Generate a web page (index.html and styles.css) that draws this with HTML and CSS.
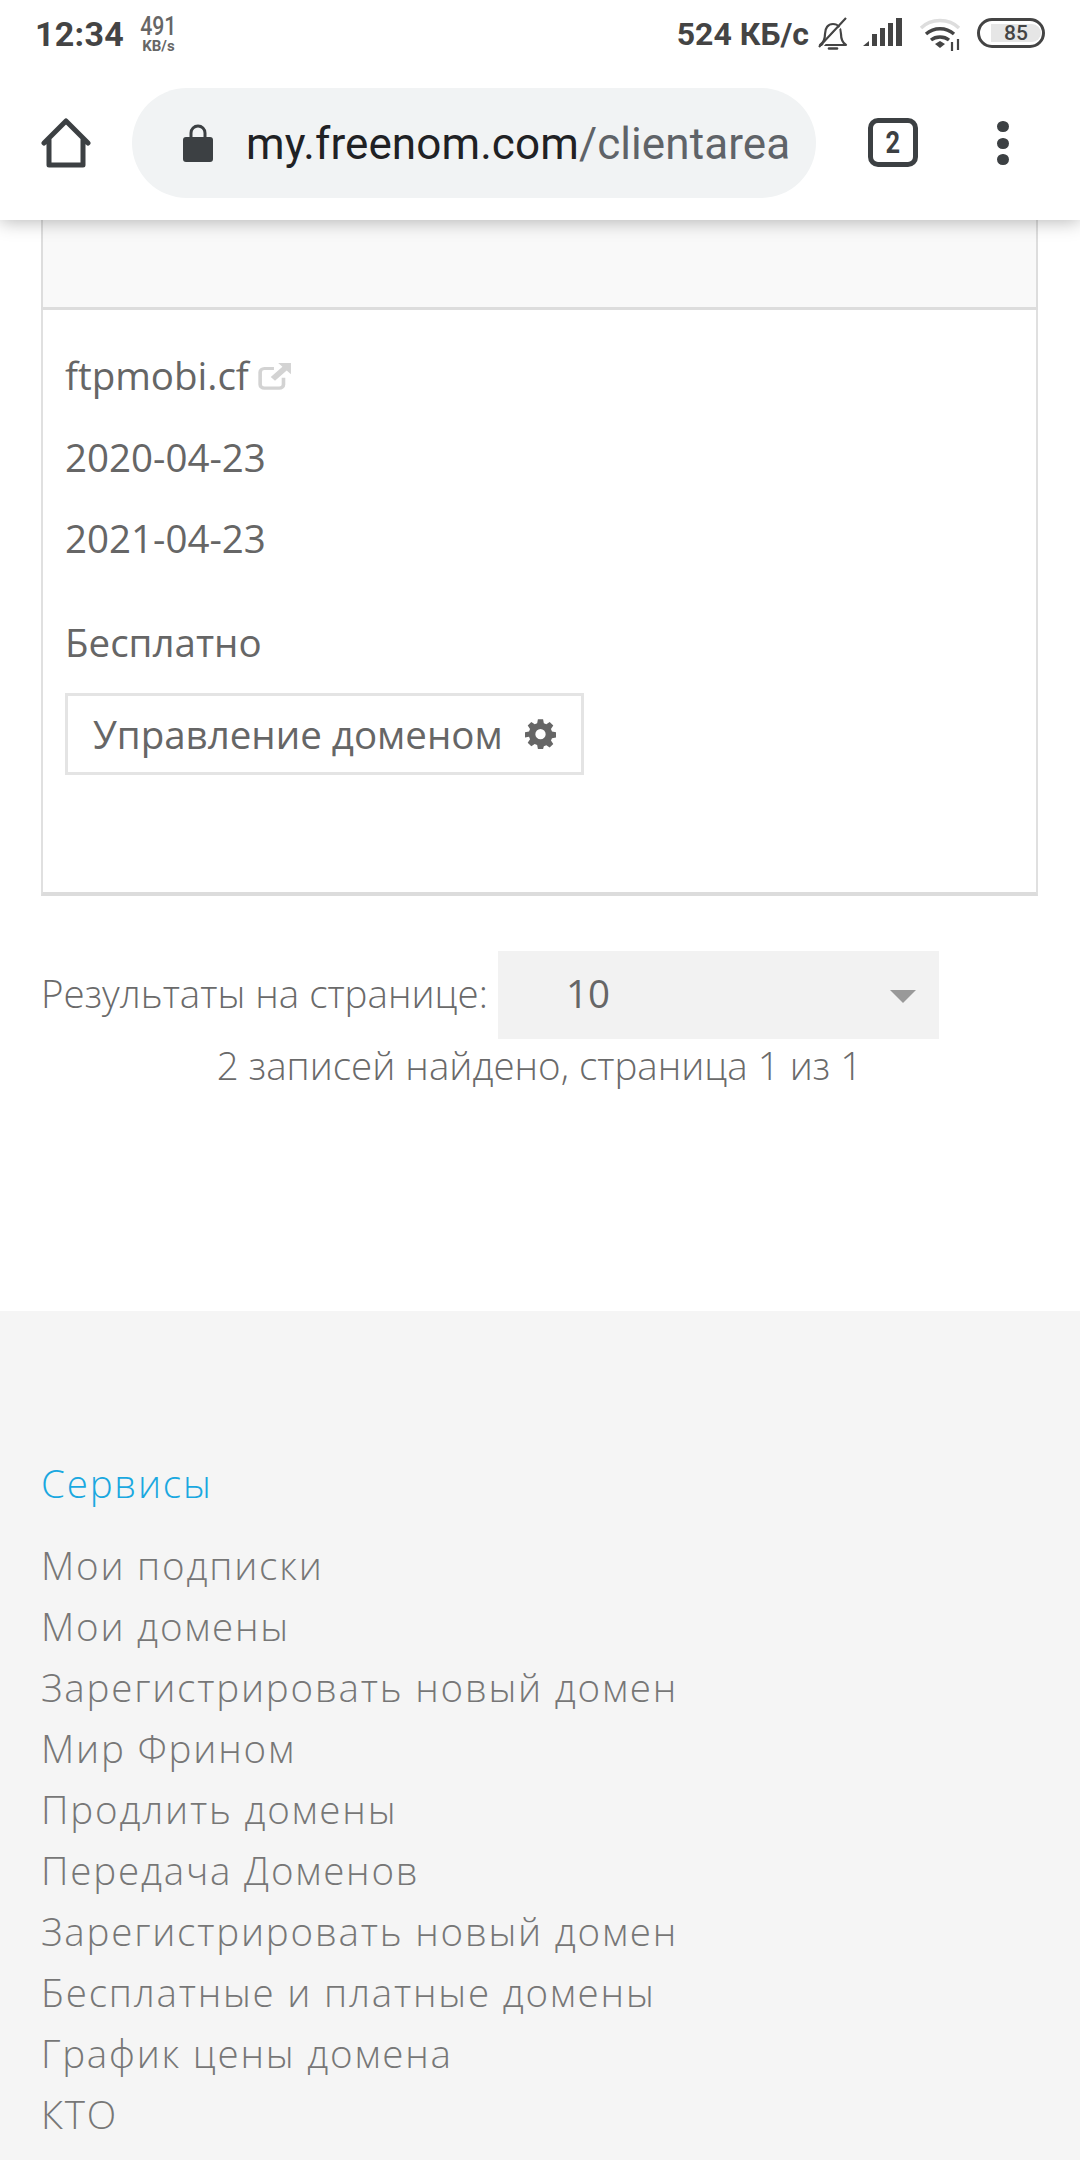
FILE: index.html
```html
<!DOCTYPE html>
<html lang="ru">
<head>
<meta charset="utf-8">
<title>my.freenom.com</title>
<link rel="stylesheet" href="styles.css">
</head>
<body>
<header class="chrome">
  <div class="status">
    <div class="status-left">
      <span class="time">12:34</span>
      <span class="speed-small"><b>491</b><i>KB/s</i></span>
    </div>
    <div class="status-right">
      <span class="speed">524 КБ/с</span>
      <svg class="ic-bell" viewBox="0 0 32 33" width="32" height="33"><path d="M3 28c3-2 5-5 5-11 0-6 3-10 8-10s8 4 8 10c0 6 2 9 5 11z" fill="none" stroke="#444" stroke-width="2.2" stroke-linejoin="round"/><path d="M12 31.500h8" stroke="#444" stroke-width="2.6" stroke-linecap="round"/><path d="M2 30L29 1" stroke="#444" stroke-width="2.2"/><path d="M4 31L31 2" stroke="#fff" stroke-width="1.4"/></svg>
      <svg class="ic-signal" viewBox="0 0 40 29" width="40" height="29"><path d="M0 28l6-5v5z" fill="#444"/><rect x="9" y="16" width="5" height="12" fill="#444"/><rect x="17" y="10" width="5" height="18" fill="#444"/><rect x="25" y="5" width="5" height="23" fill="#444"/><rect x="33" y="0" width="6" height="28" fill="#444"/></svg>
      <svg class="ic-wifi" viewBox="0 0 43 33" width="43" height="33"><path d="M2 10C12 0 30 0 40 10" fill="none" stroke="#ddd" stroke-width="3.4"/><path d="M7 16c8-7 20-7 28 0" fill="none" stroke="#444" stroke-width="3.4"/><path d="M12 22c5-4 13-4 18 0" fill="none" stroke="#444" stroke-width="3.4"/><path d="M16 26l5-3 5 3-5 4z" fill="#444"/><path d="M33 24v9M39 21v11" stroke="#444" stroke-width="2.200"/></svg>
      <span class="battery"><span class="battery-fill">85</span></span>
    </div>
  </div>
  <div class="toolbar">
    <svg class="ic-home" viewBox="0 0 50 50" width="50" height="50"><path d="M3 25L25 3l22 22M8 21v26h34V21" fill="none" stroke="#3c4043" stroke-width="5" stroke-linecap="round" stroke-linejoin="round"/></svg>
    <div class="omnibox">
      <svg class="ic-lock" viewBox="0 0 30 38" width="30" height="38"><path d="M8 15V9a7 7 0 0 1 14 0v6" fill="none" stroke="#3c4043" stroke-width="3"/><rect x="0" y="13" width="30" height="25" rx="3" fill="#3c4043"/></svg>
      <span class="url">my.freenom.com<span class="url-path">/clientarea</span></span>
    </div>
    <span class="tabs"><span class="tabs-num">2</span></span>
    <span class="menu"><i></i><i></i><i></i></span>
  </div>
</header>

<main class="content">
  <div class="table-head"></div>
  <div class="card">
    <div class="domain">ftpmobi.cf
      <svg class="ic-ext" viewBox="0 0 32 30" width="34" height="28" preserveAspectRatio="none"><path d="M24 17v7a4 4 0 0 1-4 4H6a4 4 0 0 1-4-4V11a4 4 0 0 1 4-4h9" fill="none" stroke="#d3d3d3" stroke-width="3.4"/><path d="M19 1h12v12l-4-4-11 11-4-4L23 5z" fill="#d3d3d3"/></svg>
    </div>
    <div class="date">2020-04-23</div>
    <div class="date">2021-04-23</div>
    <div class="price">Бесплатно</div>
    <a class="manage">Управление доменом
      <svg class="ic-gear" viewBox="0 0 24 24" width="31" height="31"><path fill="#666" fill-rule="evenodd" d="M10 1h4l.6 3.100 1.900.8L19.100 3.100 21.900 5.900l-1.800 2.600.8 1.900L24 11v4l-3.100.6-.8 1.900 1.800 2.600-2.800 2.800-2.600-1.800-1.900.8L14 24h-4l-.6-3.100-1.900-.8-2.600 1.800-2.800-2.800 1.800-2.600-.8-1.900L0 15v-4l3.100-.6.8-1.900L2.100 5.900 4.900 3.100l2.600 1.800 1.900-.8zM12 8.500a4 4 0 1 0 0 8 4 4 0 0 0 0-8z"/></svg>
    </a>
  </div>

  <div class="per-page">
    <span class="per-label">Результаты на странице:</span>
    <div class="select"><span>10</span><i class="caret"></i></div>
  </div>
  <p class="count">2 записей найдено, страница 1 из 1</p>
</main>

<footer class="footer">
  <h4 class="foot-title">Сервисы</h4>
  <ul class="foot-list">
    <li>Мои подписки</li>
    <li>Мои домены</li>
    <li>Зарегистрировать новый домен</li>
    <li>Мир Фрином</li>
    <li>Продлить домены</li>
    <li>Передача Доменов</li>
    <li>Зарегистрировать новый домен</li>
    <li>Бесплатные и платные домены</li>
    <li>График цены домена</li>
    <li>КТО</li>
  </ul>
</footer>
</body>
</html>
```
FILE: styles.css
```css
* { box-sizing: border-box; }
html, body { margin: 0; padding: 0; }
body { width: 1080px; height: 2160px; overflow: hidden; background: #fff; font-family: "Open Sans", sans-serif; color: #666; }

.chrome { height: 220px; background: #fff; box-shadow: 0 1px 18px rgba(0,0,0,.3); position: relative; z-index: 2; }
.status { height: 64px; display: flex; justify-content: space-between; padding: 14px 35px 0 35px; font-family: Roboto, sans-serif; color: #444; }
.status-left { display: flex; align-items: flex-start; gap: 13px; }
.time { font-size: 34px; font-weight: 700; line-height: 40px; letter-spacing: .3px; }
.speed-small { display: flex; flex-direction: column; align-items: center; margin-top: 1px; color: #666; }
.speed-small b { font-size: 25px; font-weight: 500; line-height: 24px; transform: scaleX(.85); }
.speed-small i { font-style: normal; font-size: 15px; font-weight: 700; line-height: 14px; }
.status-right { display: flex; align-items: flex-start; }
.speed { font-size: 32px; font-weight: 700; line-height: 40px; margin-right: 8px; }
.ic-bell { margin-top: 3px; margin-right: 14px; }
.ic-signal { margin-top: 4px; margin-right: 16px; }
.ic-wifi { margin-top: 4px; margin-right: 15px; }
.battery { width: 68px; height: 30px; margin-top: 4px; border: 3px solid #444; border-radius: 15px; padding: 3px 1px; display: flex; }
.battery-fill { width: 50px; margin-left: 10px; background: #e6e6e6; border-radius: 0 9px 9px 0; font-size: 21px; font-weight: 500; line-height: 18px; text-align: center; }

.toolbar { height: 156px; display: flex; align-items: flex-start; padding: 24px 0 0 41px; }
.ic-home { margin-top: 30px; flex: none; }
.omnibox { width: 684px; height: 110px; margin-left: 41px; background: #f1f3f4; border-radius: 55px; display: flex; align-items: center; padding-left: 51px; overflow: hidden; }
.ic-lock { flex: none; }
.url { margin-left: 33px; padding-top: 2px; font-family: Roboto, sans-serif; font-size: 44px; letter-spacing: .1px; color: #202124; white-space: nowrap; }
.url-path { color: #5f6368; }
.tabs { width: 50px; height: 49px; margin: 30px 0 0 52px; border: 5px solid #3c4043; border-radius: 10px; display: flex; align-items: center; justify-content: center; font-family: Roboto, sans-serif; font-weight: 700; font-size: 31px; color: #3c4043; }
.tabs-num { display: block; transform: scaleX(.82); }
.menu { display: flex; flex-direction: column; gap: 5.5px; margin: 33px 0 0 79px; }
.menu i { width: 11.5px; height: 11px; border-radius: 50%; background: #3c4043; }

.content { height: 1091px; padding: 0 42px 0 41px; }
.table-head { height: 90px; background: #f9f9f9; border: 2px solid #ddd; border-top: 0; border-bottom-width: 3px; }
.card { height: 586px; border: 2px solid #e0e0e0; border-top: 0; border-bottom: 4px solid #dcdcdc; padding: 40px 0 0 22px; font-size: 38.5px; }
.domain { height: 48px; line-height: 48px; display: flex; align-items: center; gap: 9px; margin-top: 1px; }
.ic-ext { margin-top: 2px; }
.date { height: 48px; line-height: 48px; margin-top: 33.5px; }
.price { height: 48px; line-height: 48px; margin-top: 56px; }
.manage { width: 519px; height: 82px; margin-top: 26.5px; border: 3px solid #e4e4e4; display: flex; align-items: center; justify-content: space-between; padding: 0 25px; white-space: nowrap; }

.per-page { display: flex; align-items: center; margin-top: 55px; }
.per-label { font-size: 38.5px; font-weight: 300; white-space: nowrap; width: 457px; padding-bottom: 4px; color: #6a6a6a; }
.select { width: 441px; height: 88px; background: #f2f2f2; display: flex; align-items: center; justify-content: space-between; padding: 0 23px 4px 68px; font-size: 38.5px; }
.caret { width: 0; height: 0; margin-top: 7px; border: 13px solid transparent; border-top: 13px solid #999; border-bottom: 0; }
.count { margin: 1px 0 0; text-align: center; font-size: 38.5px; font-weight: 300; line-height: 50px; color: #6a6a6a; }

.footer { height: 849px; background: #f5f5f5; padding: 0 41px; }
.foot-title { margin: 0; padding-top: 148px; font-size: 38.5px; font-weight: 300; line-height: 48px; letter-spacing: 1.8px; color: #1aa8e0; }
.foot-list { list-style: none; margin: 28px 0 0; padding: 0; font-size: 38.5px; font-weight: 300; letter-spacing: 1.8px; color: #777; }
.foot-list li { height: 61px; line-height: 61px; white-space: nowrap; }
```
